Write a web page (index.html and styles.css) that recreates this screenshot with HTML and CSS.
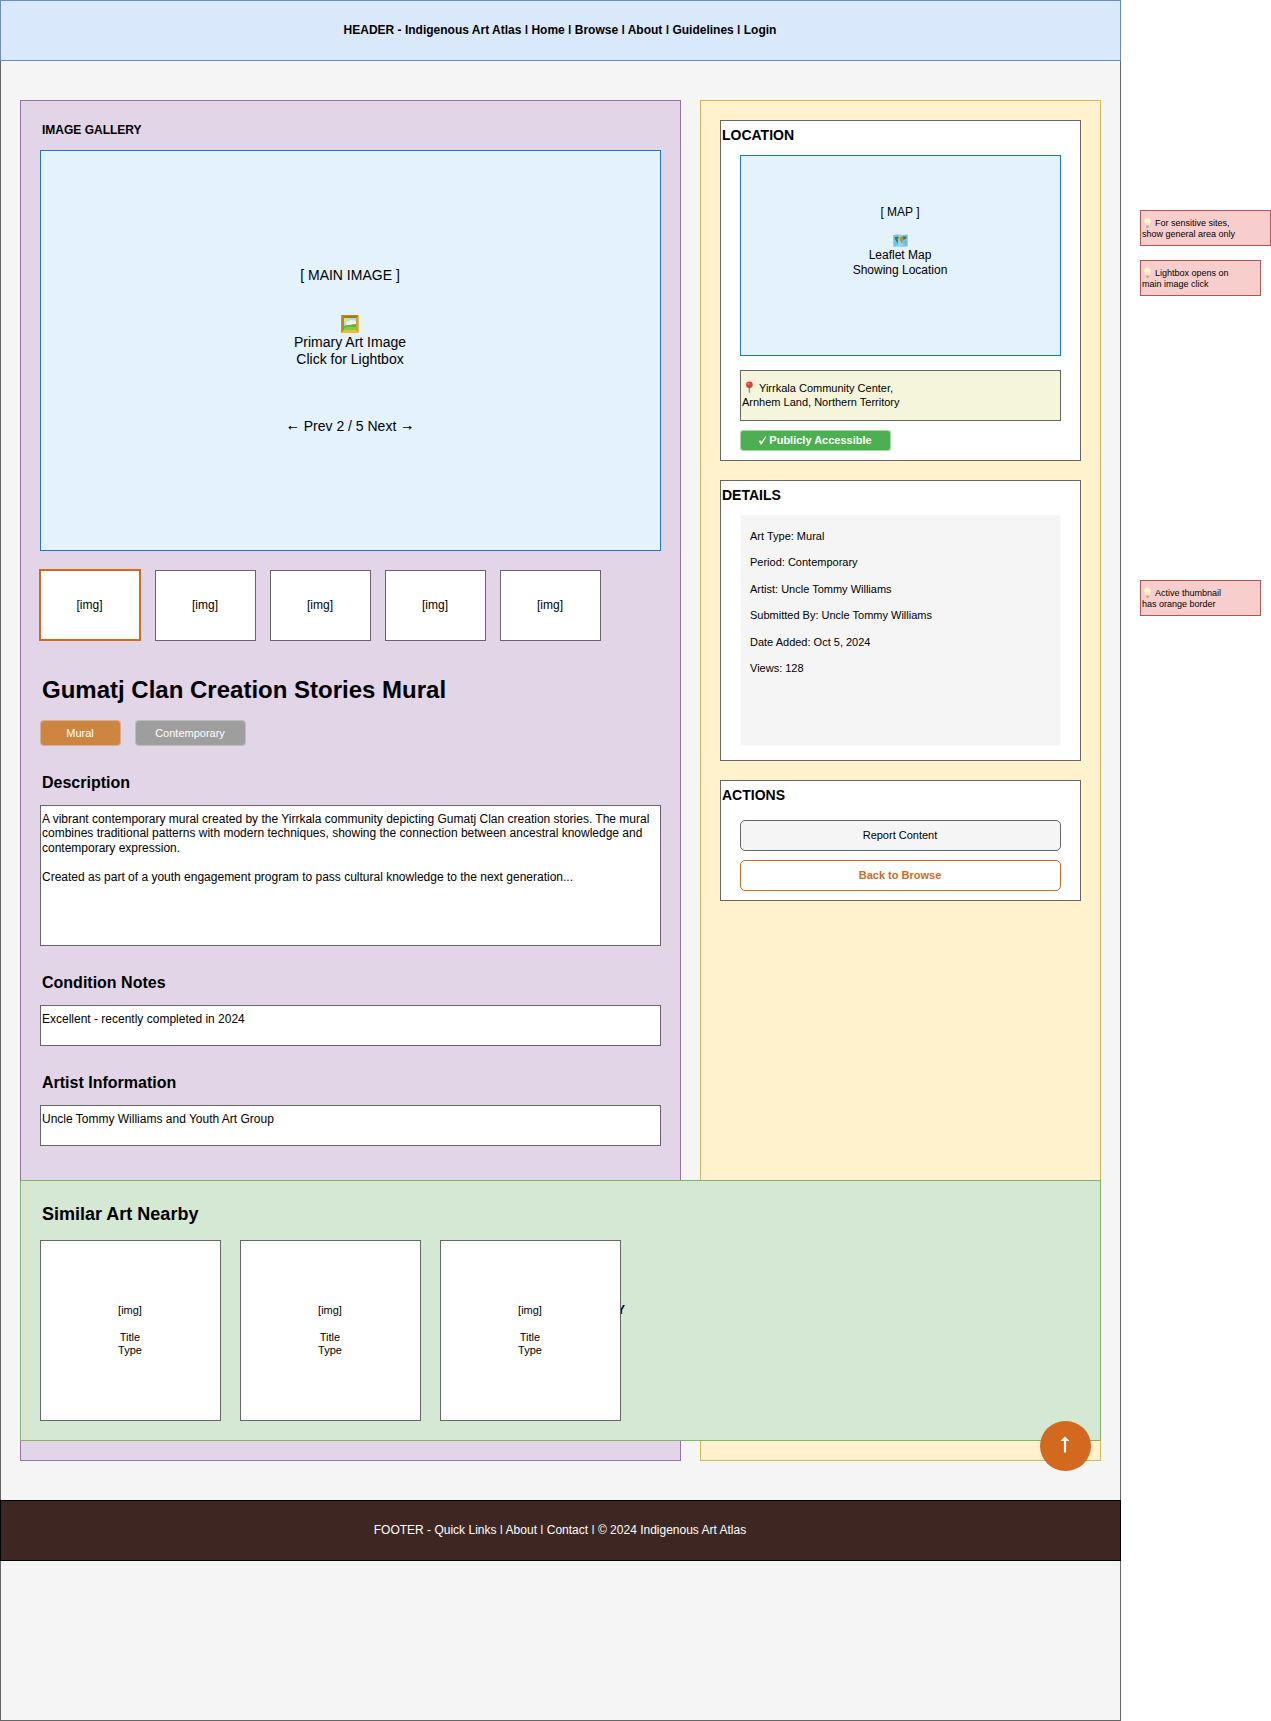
FILE: index.html
```html
<!DOCTYPE html>
<html lang="en">
<head>
<meta charset="utf-8">
<title>Indigenous Art Atlas - Art Detail</title>
<link rel="stylesheet" href="styles.css">
</head>
<body>
<svg class="defs" width="0" height="0" aria-hidden="true">
  <symbol id="bulb" viewBox="0 0 9 12">
    <path d="M4.5.8a3.3 3.3 0 0 0-3.3 3.3c0 1.8 1.5 2.5 1.8 4.4h3C6.300 6.600 7.800 5.900 7.800 4.100A3.300 3.300 0 0 0 4.500.8z" fill="#fdf5d4" stroke="#f3dfb8" stroke-width=".5"/>
    <path d="M3.800 8V5.400l.7.500.7-.5V8" fill="none" stroke="#f3d887" stroke-width=".5"/>
    <path d="M3.200 8.500h2.600v1.800l-.6.8H3.800l-.6-.8z" fill="#b5aaa4"/>
  </symbol>
</svg>
<div class="board">
  <div class="page">
    <header class="header"><p>HEADER - Indigenous Art Atlas <span class="sep">|</span> Home <span class="sep">|</span> Browse <span class="sep">|</span> About <span class="sep">|</span> Guidelines <span class="sep">|</span> Login</p></header>
    <main class="columns">
      <section class="gallery">
        <h2 class="gallery-label">IMAGE GALLERY</h2>
        <div class="main-image">
          <p>[ MAIN IMAGE ]</p>
          <svg class="frame-icon" viewBox="0 0 18 18">
            <rect x=".3" y=".3" width="17.400" height="17.400" fill="#d9a520"/>
            <path d="M.3.3h17.400l-3 3H3.300z" fill="#a87818"/>
            <path d="M.3.3l3 3v11.400l-3 3z" fill="#b98a1a"/>
            <path d="M.3 17.700l3-3h11.400l3 3z" fill="#f0bd2c"/>
            <rect x="3" y="3" width="12" height="12" fill="#a9dcf4"/>
            <circle cx="5" cy="5" r="1.900" fill="#ffd94a"/>
            <path d="M5 8.500a2 2 0 0 1 3-2 2.500 2.500 0 0 1 4-1 2 2 0 0 1 3 1.500v3H5z" fill="#eef3f8"/>
            <path d="M3 11c3-2 6-.5 8-1.500 2-.8 3-.6 4-.3V15H3z" fill="#5cb83c"/>
            <path d="M3 13c4-2 8-1 12-1v3H3z" fill="#7fce4a"/>
          </svg>
          <p>Primary Art Image<br>Click for Lightbox</p>
          <p class="pager"><span class="arrow">←</span> Prev 2 / 5 Next <span class="arrow">→</span></p>
        </div>
        <div class="thumbs">
          <div class="thumb active">[img]</div>
          <div class="thumb">[img]</div>
          <div class="thumb">[img]</div>
          <div class="thumb">[img]</div>
          <div class="thumb">[img]</div>
        </div>
        <h1 class="title">Gumatj Clan Creation Stories Mural</h1>
        <div class="tags">
          <span class="tag tag-type">Mural</span>
          <span class="tag tag-period">Contemporary</span>
        </div>
        <h3 class="section-title">Description</h3>
        <div class="text-box description">A vibrant contemporary mural created by the Yirrkala community depicting Gumatj Clan creation stories. The mural<br>combines traditional patterns with modern techniques, showing the connection between ancestral knowledge and<br>contemporary expression.<br><br>Created as part of a youth engagement program to pass cultural knowledge to the next generation...</div>
        <h3 class="section-title">Condition Notes</h3>
        <div class="text-box">Excellent - recently completed in 2024</div>
        <h3 class="section-title">Artist Information</h3>
        <div class="text-box">Uncle Tommy Williams and Youth Art Group</div>
      </section>
      <aside class="sidebar">
        <section class="card">
          <h3 class="card-title">LOCATION</h3>
          <div class="map">
            <p>[ MAP ]</p>
            <svg class="map-icon" viewBox="0 0 15 13">
              <path d="M.3 1l4.800-.6 4.800.6 4.800-.6v11.800l-4.800.6-4.800-.6-4.800.6z" fill="#6cc4ee"/>
              <path d="M5.100.4l4.800.6v11.800l-4.800-.6z" fill="#8ed4f4"/>
              <path d="M1.500 3.200l3.400-.6 1 1.200-1.500 1.700.9 1.500-.9 2.600-1.200-2.500-1-1.700z" fill="#4c7a3a"/>
              <path d="M7 3.200l2.500-.8 4 .3-.3 1.800-2 1-.8 1-1 .2.200 1.700-1.100 1.200-.7-2.400-1.200-1.500z" fill="#b98f35"/>
              <path d="M9.600 2.600l3.900.2-.6 1.800-2 .9z" fill="#43703c"/>
              <path d="M11.500 8l1.500-.2.200 1.500-1.500.2z" fill="#c9a23c"/>
            </svg>
            <p>Leaflet Map<br>Showing Location</p>
          </div>
          <div class="address">
            <p><svg class="pin-icon" viewBox="0 0 9 13"><path d="M3.700 6h1.300v5l-.6 1.500-.7-1.500z" fill="#8d8a8a"/><circle cx="4.400" cy="3.700" r="3.300" fill="#e03a3c"/><circle cx="3.500" cy="2.700" r="1" fill="#f58a88"/></svg>Yirrkala Community Center,</p>
            <p>Arnhem Land, Northern Territory</p>
          </div>
          <div class="access"><svg class="check-icon" viewBox="0 0 9 9"><path d="M.8 5l1.500-.7 1 1.700L7.300.5l1 .2-4.600 7.800-1 .1z" fill="#fff"/></svg>Publicly Accessible</div>
        </section>
        <section class="card details">
          <h3 class="card-title">DETAILS</h3>
          <div class="facts">
            <p>Art Type: Mural</p>
            <p>Period: Contemporary</p>
            <p>Artist: Uncle Tommy Williams</p>
            <p>Submitted By: Uncle Tommy Williams</p>
            <p>Date Added: Oct 5, 2024</p>
            <p>Views: 128</p>
          </div>
        </section>
        <section class="card actions">
          <h3 class="card-title">ACTIONS</h3>
          <button class="btn">Report Content</button>
          <button class="btn btn-back">Back to Browse</button>
        </section>
      </aside>
    </main>
    <section class="similar">
      <span class="similar-label">Y</span>
      <h2 class="similar-title">Similar Art Nearby</h2>
      <div class="similar-list">
        <div class="similar-card"><p>[img]</p><p>Title</p><p>Type</p></div>
        <div class="similar-card"><p>[img]</p><p>Title</p><p>Type</p></div>
        <div class="similar-card"><p>[img]</p><p>Title</p><p>Type</p></div>
      </div>
    </section>
    <div class="to-top"><svg viewBox="0 0 10 17"><path d="M5 .6l4.600 4.500H6.100V16.500H3.900V5.100H.4z" fill="#fff"/></svg></div>
    <footer class="footer"><p>FOOTER - Quick Links <span class="sep">|</span> About <span class="sep">|</span> Contact <span class="sep">|</span> © 2024 Indigenous Art Atlas</p></footer>
  </div>
  <div class="notes">
    <div class="note note-wide"><p><svg class="bulb-icon"><use href="#bulb"/></svg>For sensitive sites,</p><p>show general area only</p></div>
    <div class="note"><p><svg class="bulb-icon"><use href="#bulb"/></svg>Lightbox opens on</p><p>main image click</p></div>
    <div class="note note-thumb"><p><svg class="bulb-icon"><use href="#bulb"/></svg>Active thumbnail</p><p>has orange border</p></div>
  </div>
</div>
</body>
</html>
```
FILE: styles.css
```css
* { box-sizing: border-box; }
body { margin: 0; background: #fff; color: #000; font: 12px/14.4px "Liberation Sans", Arial, sans-serif; }
p, h1, h2, h3 { margin: 0; }
.defs { position: absolute; }
.board { display: flex; width: 1271px; height: 1721px; }
.sep { display: inline-block; transform: scaleY(.8); transform-origin: 50% 14%; }

/* page frame */
.page { position: relative; width: 1121px; height: 1721px; background: #f5f5f5; box-shadow: inset 0 0 0 1px #666; }
.header { height: 61px; padding-right: 1px; display: flex; align-items: center; justify-content: center; background: #dae8fc; border: 1px solid #6c8ebf; font-weight: bold; }
.footer { height: 61px; margin-top: 39px; padding-right: 1px; display: flex; align-items: center; justify-content: center; background: #3e2723; border: 1px solid #000; color: #fff; }
.columns { display: flex; gap: 19px; height: 1361px; margin: 39px 20px 0; }

/* gallery column */
.gallery { width: 661px; padding: 19px; background: #e1d5e7; border: 1px solid #9673a6; }
.gallery-label { height: 30px; padding-left: 2px; font-size: 12px; line-height: 20px; }
.main-image { height: 401px; padding: 116px 1px 0 0; display: flex; flex-direction: column; align-items: center; text-align: center; background: #e3f2fd; border: 1px solid #1976d2; font-size: 14px; line-height: 16.8px; }
.frame-icon { width: 18px; height: 18px; margin: 31px 0 1px; }
.pager { margin-top: 51px; }
.arrow { line-height: 0; vertical-align: 1px; -webkit-text-stroke: .3px #000; }
.thumbs { display: flex; gap: 14px; margin-top: 19px; }
.thumb { width: 101px; height: 71px; padding-right: 1px; display: flex; align-items: center; justify-content: center; background: #fff; border: 1px solid #666; }
.thumb.active { width: 102px; height: 72px; margin: -1px 0 0 -1px; border: 2px solid #d2691e; }
.title { height: 60px; margin-top: 19px; padding-left: 2px; font-size: 24px; line-height: 60px; }
.tags { display: flex; gap: 14px; color: #fff; font-size: 11px; }
.tag { width: 81px; height: 26px; padding-right: 1px; display: flex; align-items: center; justify-content: center; border: 1px solid; border-radius: 4px; background-clip: padding-box; }
.tag-type { background-color: #cd853f; border-color: #cd853f80; }
.tag-period { width: 111px; background-color: #9e9e9e; border-color: #9e9e9e80; }
.section-title { margin-top: 14px; padding-left: 2px; font-size: 16px; line-height: 45px; }
.text-box { height: 41px; padding: 6px 1px 0; background: #fff; border: 1px solid #666; white-space: nowrap; }
.description { height: 141px; }

/* sidebar */
.sidebar { width: 401px; padding: 19px; display: flex; flex-direction: column; gap: 19px; background: #fff2cc; border: 1px solid #d6b656; }
.card { height: 341px; padding: 0 19px; background: #fff; border: 1px solid #666; }
.card-title { height: 34px; margin-left: -18px; font-size: 14px; line-height: 28px; }
.map { height: 201px; padding: 49px 1px 0 0; display: flex; flex-direction: column; align-items: center; text-align: center; background: #e3f2fd; border: 1px solid #1976d2; }
.map-icon { width: 15px; height: 13px; margin: 15px 0 1px; }
.address { height: 51px; margin-top: 14px; padding: 10px 1px 0; background: #f5f5dc; border: 1px solid #666; font-size: 11px; line-height: 14px; }
.pin-icon { width: 9px; height: 13px; margin: 0 5px 0 3px; vertical-align: -2px; }
.address p { height: 14px; }
.access { width: 151px; height: 21px; margin-top: 9px; padding-right: 1px; display: flex; align-items: center; justify-content: center; gap: 2px; background: #4caf50 padding-box; border: 1px solid #4caf5080; border-radius: 3px; color: #fff; font-size: 11px; font-weight: bold; }
.check-icon { width: 9px; height: 9px; }
.details { height: 281px; }
.facts { height: 231px; padding: 7px 9px 0; background: #f5f5f5 padding-box; border: 1px solid #f5f5f580; font-size: 11px; line-height: 26.4px; }
.actions { height: 121px; }
.actions .card-title { height: 39px; }
.btn { display: block; width: 100%; height: 31px; margin: 0 0 9px; padding: 0 1px 2px 0; background: #f5f5f5; border: 1px solid #666; border-radius: 5px; color: #000; font: 11px "Liberation Sans", Arial, sans-serif; }
.btn-back { background: #fff; border-color: #d2691e; color: #d2691e; font-weight: bold; }

/* similar art panel, laid over both columns */
.similar { position: absolute; left: 20px; top: 1180px; width: 1081px; height: 261px; padding: 7px 19px 0; background: #d5e8d4; border: 1px solid #82b366; }
.similar-label { position: absolute; left: 596px; top: 0; font-weight: bold; line-height: 259px; }
.similar-title { padding-left: 2px; font-size: 18px; line-height: 52px; }
.similar-list { position: relative; display: flex; gap: 19px; }
.similar-card { width: 181px; height: 181px; padding: 63px 1px 0 0; background: #fff; border: 1px solid #666; text-align: center; font-size: 11px; line-height: 13.2px; }
.similar-card p:first-child { margin-bottom: 13.6px; }
.to-top { position: absolute; left: 1040px; top: 1420.5px; width: 50.5px; height: 50px; border-radius: 50%; background: #d2691e; display: flex; justify-content: center; padding: 15px 1px 0 0; }
.to-top svg { width: 10px; height: 17px; }

/* annotations beside the page */
.notes { width: 131px; margin: 210px 0 0 19px; font-size: 9px; line-height: 11px; }
.note { width: 121px; height: 36px; margin-bottom: 14px; padding: 7px 1px 0; background: #f8cecc; border: 1px solid #b85450; white-space: nowrap; }
.note p { height: 11px; }
.note-wide { width: 131px; }
.note-thumb { margin-top: 284px; }
.bulb-icon { width: 9px; height: 12px; margin: -2px 3px 0 1px; vertical-align: -3px; }
```
